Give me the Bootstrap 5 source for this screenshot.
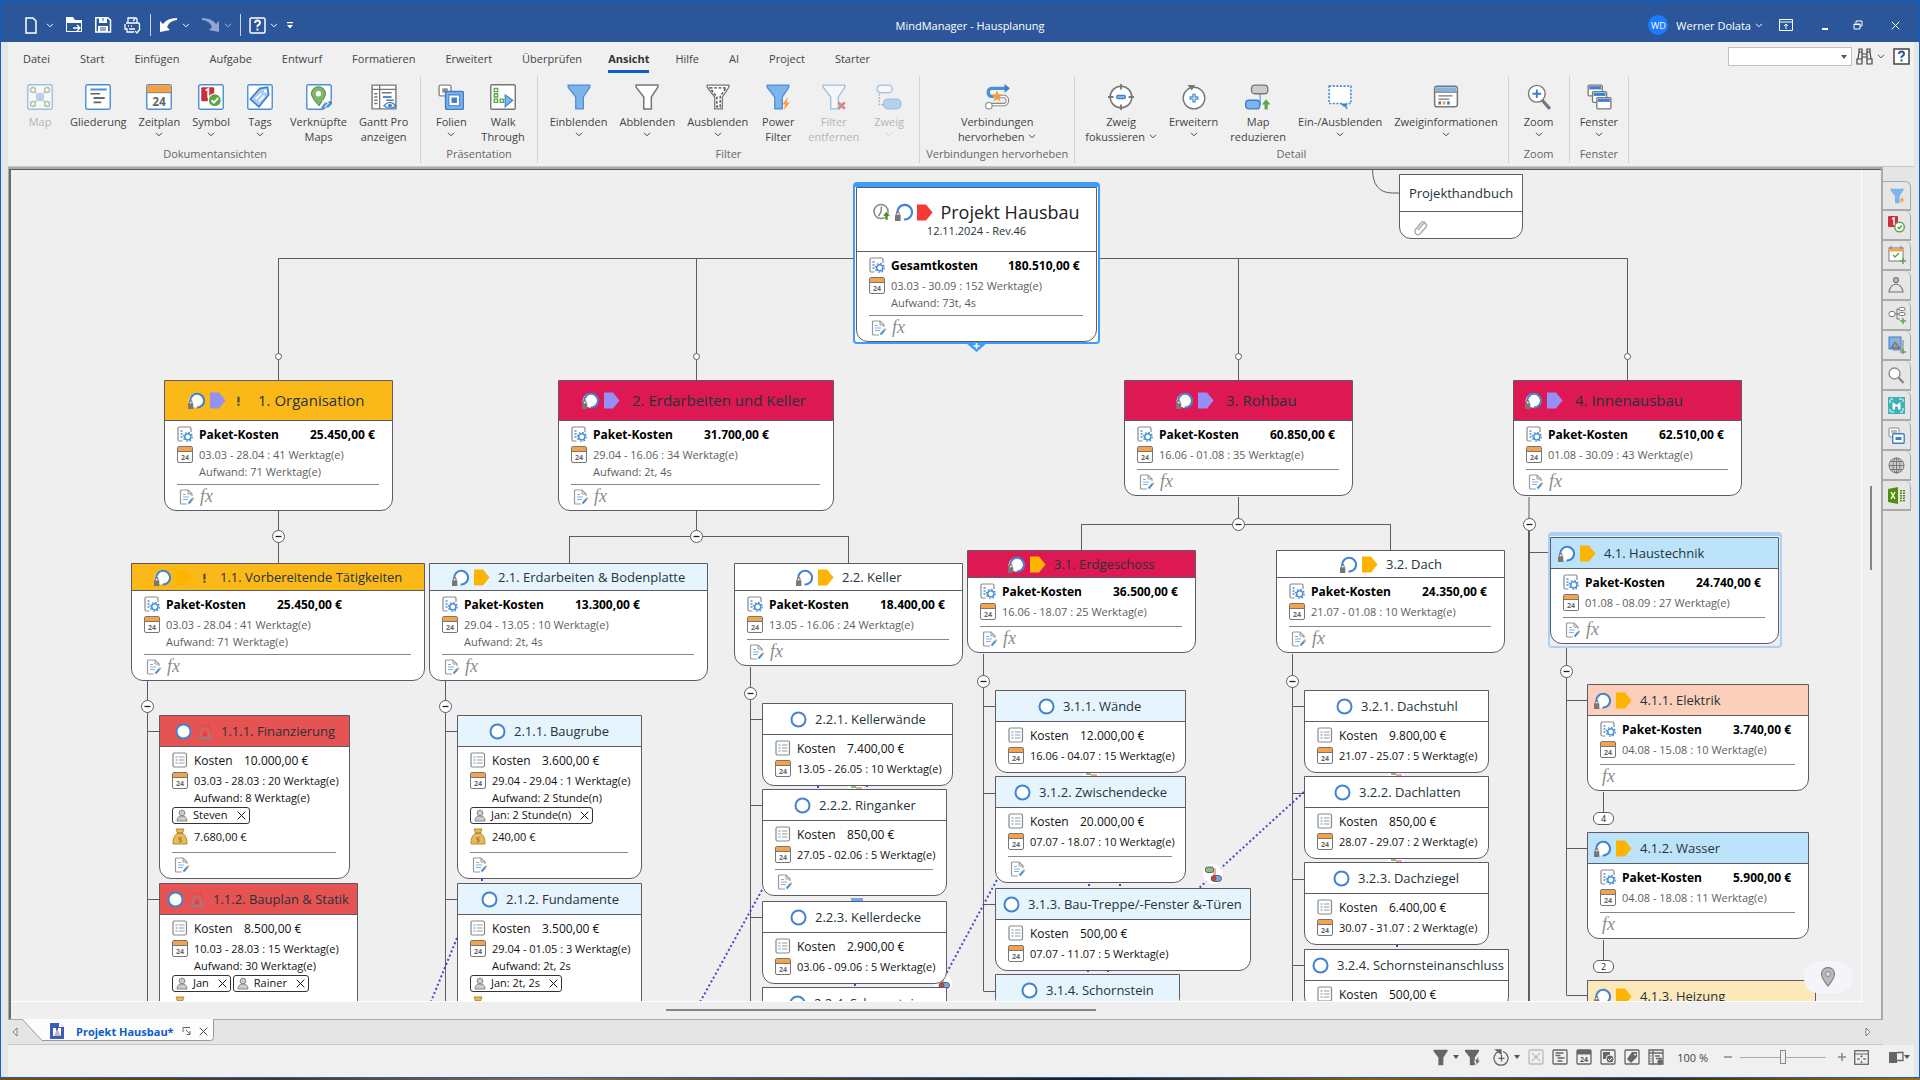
<!DOCTYPE html>
<html lang="de">
<head>
<meta charset="utf-8">
<meta name="viewport" content="width=device-width, initial-scale=1">
<title>MindManager - Hausplanung</title>
<link href="https://cdn.jsdelivr.net/npm/bootstrap@5.3.0/dist/css/bootstrap.min.css" rel="stylesheet">
<style>
:root{--ui:"Open Sans","Noto Sans",sans-serif;--ln:#5d5c66;--blue:#4a90d9}
body{font-family:var(--ui);font-size:11px;line-height:15px;color:#444;background:#e6e6e6;overflow:hidden}
svg{display:block;flex:none}
button{font-family:inherit}
.app-window{border:1px solid #0b63c9;border-bottom:0;min-height:0}
.fit-h{min-height:0}
.fit-w{min-width:0}
.plain{background:none;border:0;padding:0;color:inherit;display:flex;align-items:center}
.desk{height:2px;background:linear-gradient(90deg,#7a4a1c,#4c3420,#8a6a50,#5a3a1c,#1c1c1c,#8a5a1c,#3a2410,#a06a20);border-top:1px solid #1b5fb8;box-sizing:content-box}
/* title bar */
.titlebar{height:41px;background:#2b579a;color:#fff;display:grid;grid-template-columns:1fr auto 1fr;align-items:center;padding:7px 3px 0 23px}
.titlebar .vr-line{width:1px;height:22px;background:#c8d4e8}
.avatar{width:20px;height:20px;border-radius:50%;background:#1e7bff;font-size:9px}
/* ribbon */
.frame{padding:0 5px 0 7px}
.ribbon{background:#f0f0f0;border-bottom:1px solid #c6c6c6}
.menu-tabs{height:33px}
.menu-tabs .nav-link{color:#444;padding:9px 15px 0;height:31px;line-height:15px;white-space:nowrap}
.menu-tabs .nav-link.active{font-weight:700;color:#333;padding:9px 0 0;margin:0 11px;border-bottom:3px solid #0b5ec9}
.search-box{width:124px;height:19px;border:1px solid #c0c0c0;border-radius:0;background-color:#fff;font-size:11px;padding:0 4px}
.search-wrap{position:relative}
.search-wrap svg{position:absolute;right:5px;top:8px}
.groups{height:91px}
.rgroup{border-right:1px solid #d2d2d2;height:87px;padding:0 6px;display:flex;flex-direction:column;justify-content:space-between;margin-top:1px}
.rbtn{border:0;border-radius:2px;padding:9px 6px 0;min-width:48px;font-size:11px;line-height:15px;color:#444;display:flex;flex-direction:column;align-items:center;white-space:nowrap}
.rbtn svg.big{width:26px;height:26px;margin-bottom:4px;margin-top:-1px}
.rbtn .chev{margin-top:3px}
.rbtn:disabled{color:#b5b5b5;border:0;opacity:1}
.rbtn:disabled svg{opacity:.5}
.gtitle{text-align:center;color:#666;height:17px;white-space:nowrap}
/* map */
.pane{border:1px solid #aaa;border-top:2px solid #aaa;border-right:2px solid #aaa;background:#efefef;min-height:0}
.pane-in{border-top:1px solid #5a5a5a;border-left:2px solid #6a6a6a;position:relative;overflow:hidden;padding:0 19px 17px 0}
.view{position:relative;overflow:hidden;border-right:1px solid #fff;border-bottom:1px solid #fff}
.plane{position:absolute;left:-11px;top:-170px;width:1960px;height:1100px}
.plane>svg{position:absolute;left:0;top:0}
.node{position:absolute;border:1px solid var(--ln);border-radius:0 0 12px 12px;background:#fff;color:#111}
.node .hd{display:flex;align-items:center;border-bottom:1px solid var(--ln);color:#25333a;white-space:nowrap;gap:5px}
.node .hd span{padding-left:3px}
.l0 .hd{height:64px}.l1 .hd{height:40px;font-size:15px}.l2 .hd{height:27px;font-size:13px}.l3 .hd{height:31px;font-size:13px}
.l1 .hd span{padding-left:7px}
.node .bd{padding:3px 13px 0 12px}
.rw{display:flex;align-items:center;gap:6px;height:20px;white-space:nowrap}
.rw.eff{height:15px;padding-left:22px}
.rw.money{height:22px}
.rw.chips{height:20px;gap:2px}
.rw.sole{margin-bottom:3px}
.lv .lbl{width:50px}.pk .lbl{width:111px;font-weight:700}.pk .val{font-weight:700}.pk .kos{color:#000}
.l0 .pk .lbl{width:117px}
.kos{font-size:12px}
.grey{color:#5e5e5e}
.ft{height:26px;border-top:1px solid #85858c;margin-top:5px;padding:0 0 2px 2px;display:flex;align-items:center;gap:5px}
.nofoot{padding-bottom:4px !important}
.fx{font:italic 18px "Liberation Serif",serif;color:#8c8c8c}
.chip{border:1px solid #333;border-radius:3px;height:17px;display:flex;align-items:center;gap:5px;padding:0 3px;line-height:14px}
.sel-root{position:absolute;border:2px solid #3d9bff;border-top-width:5px;border-radius:4px;background:#fff}
.sel-soft{position:absolute;border:2px solid #a9d1fa;border-top-width:4px;border-radius:4px;background:#efefef}
.root-head{width:100%;text-align:center}
.root-title{font-size:18px;line-height:22px;color:#222}
.note-hd{height:37px;font-size:13px}
.note-bd{height:26px;padding:8px 0 0 13px}
.sb{position:absolute;background:#858585}
.sb-h{left:35%;width:23%;height:2px;bottom:8px}
.sb-v{right:9px;top:37%;margin-top:2px;height:84px;width:2px}
.pin-btn{position:absolute;right:9px;bottom:8px;width:48px;height:32px;border-radius:14px;background:#f4f4f9;border:0;display:flex;align-items:center;justify-content:center}
/* side tabs */
.side{width:31px;padding-top:14px}
.side button{width:28px;height:30px;background:#e6e6e6;border:0;border-bottom:2px solid #aaa;border-right:1px solid #aaa;border-top-right-radius:6px;display:flex;align-items:center;justify-content:center;padding:0}
.side button:first-child{border-top:1px solid #aaa}
/* bottom */
.doctabs{height:25px;background:#e5e5e5;border-bottom:1px solid #c6c6c6}
.doctab{position:relative;width:192px;height:22px;padding-left:28px}
.doctab>*{position:relative}
.doctab>svg.bgs{position:absolute;left:0;top:-1px}
.doctab a{color:#0b5ec9;font-weight:700;text-decoration:none;white-space:nowrap}
.status{height:32px;background:#f0f0f0;padding:0 4px 8px 0;color:#444}
.zoomr{-webkit-appearance:none;appearance:none;width:86px;height:16px;background:linear-gradient(#aaa,#aaa) center/100% 1px no-repeat}
.zoomr::-webkit-slider-thumb{-webkit-appearance:none;width:6px;height:14px;background:#f0f0f0;border:1px solid #888}
</style>
<script src="https://cdn.jsdelivr.net/npm/bootstrap@5.3.0/dist/js/bootstrap.bundle.min.js"></script>
</head>
<body class="vh-100 d-flex flex-column">
<svg width="0" height="0" class="position-absolute" aria-hidden="true">
<defs>
<symbol id="cv" viewBox="0 0 8 5"><path d="M1 .8l3 3 3-3" fill="none" stroke="currentColor"/></symbol>
<symbol id="caret" viewBox="0 0 6 4"><path d="M0 0h6L3 4z" fill="#555"/></symbol>
<symbol id="fun" viewBox="0 0 24 24"><path d="M2 1h20v2l-6 9v11H9V12L2 3z"/></symbol>
<symbol id="ring" viewBox="0 0 16 16"><circle cx="8" cy="8" r="6.6" fill="#fff" stroke="#4384d0" stroke-width="1.9"/></symbol>
<symbol id="ringl" viewBox="0 0 16 16"><path d="M3 13.500A6.800 6.800 0 1 1 8 15z" fill="#fff"/><path d="M2.200 9A6.500 6.500 0 1 1 8 14.600" fill="none" stroke="#4384d0" stroke-width="1.900"/><rect y="10.500" width="5" height="5.500" rx=".5" fill="#777"/><path d="M1.200 10.500V9.400a1.300 1.300 0 0 1 2.600 0v1.100" fill="none" stroke="#777"/></symbol>
<symbol id="tag" viewBox="0 0 16 16"><path d="M0 0h9L15.500 8 9 16H0z"/></symbol>
<symbol id="warn" viewBox="0 0 16 16"><path d="M8 1l7.500 14H.5z" fill="#fdb913"/><path d="M8 4v6M8 11.500v2" stroke="#444" stroke-width="2.200"/></symbol>
<symbol id="alarm" viewBox="0 0 14 16"><path d="M3 13V9a4 4 0 0 1 8 0v4" fill="#e55353" stroke="#a87880" stroke-width="1.500"/><path d="M5.500 13V9.500q1.500-2 3 0V13z" fill="#ff2f3c"/><path d="M1 14h12" stroke="#8c8088" stroke-width="2"/><path d="M7 1v2M3 2l1 2M11 2l-1 2M1 6h1M12 6h1" stroke="#ff2f3c"/></symbol>
<symbol id="cal" viewBox="0 0 16 17"><rect x=".5" y=".5" width="15" height="16" rx="1.500" fill="#fff" stroke="#777"/><path d="M1 1h14v4.500H1z" fill="#f4a34c"/><path d="M.5 5.500h15" stroke="#777"/><text x="8" y="13.600" font-size="7" font-weight="700" text-anchor="middle" fill="#666">24</text></symbol>
<symbol id="list" viewBox="0 0 16 16"><rect x="1" y="1" width="13.500" height="14" rx="1.500" fill="#fff" stroke="#888" stroke-width="1.200"/><path d="M3.500 5h2M3.500 8h2M3.500 11h2" stroke="#4a90d9" stroke-width="1.200"/><path d="M7 5h5.500M7 8h5.500M7 11h5.500" stroke="#999" stroke-width="1.200"/></symbol>
<symbol id="gear" viewBox="0 0 16 16"><path d="M5.500 15H2.500q-1.500 0-1.500-1.500v-11Q1 1 2.500 1h10Q14 1 14 2.500V6" fill="none" stroke="#888" stroke-width="1.200"/><path d="M3.500 5h2M3.500 8h2M3.500 11h2" stroke="#4a90d9" stroke-width="1.300"/><circle cx="10.800" cy="10.800" r="3.100" fill="#fff" stroke="#4a90d9" stroke-width="1.500"/><circle cx="10.800" cy="10.800" r="4.500" fill="none" stroke="#4a90d9" stroke-width="1.200" stroke-dasharray="1.700 1.800"/></symbol>
<symbol id="note" viewBox="0 0 16 16"><path d="M13 7V5L9 1H2.500Q1.500 1 1.500 2v12q0 1 1 1H8" fill="#fff" stroke="#999" stroke-width="1.200"/><path d="M9 1v4h4" fill="none" stroke="#999"/><path d="M4 5.500h3M4 8h6M4 10.500h5" stroke="#7fb2e4" stroke-width="1.200"/><path d="M9.500 14.500l4-4.500" stroke="#4a90d9" stroke-width="2"/><path d="M13.500 10l1.200-1.300" stroke="#f4a34c" stroke-width="2"/></symbol>
<symbol id="pers" viewBox="0 0 12 13"><circle cx="6" cy="4" r="2.900" fill="#ccc" stroke="#888"/><path d="M1 12q0-5 5-5t5 5z" fill="#ccc" stroke="#888"/></symbol>
<symbol id="xx" viewBox="0 0 9 9"><path d="M.7.7l7.600 7.600M8.300.7L.7 8.300" stroke="currentColor" fill="none"/></symbol>
<symbol id="bag" viewBox="0 0 16 17"><path d="M4 1h8l-1.500 4Q15.500 9 15 16H1Q.5 9 5.500 5z" fill="#e8b959" stroke="#b98a35"/><path d="M5 5h6" stroke="#9a6f22"/><text x="8" y="14" font-size="8" text-anchor="middle" fill="#8a6420">$</text></symbol>
<symbol id="clk" viewBox="0 0 18 18"><circle cx="8" cy="8.500" r="7" fill="#fff" stroke="#888" stroke-width="1.600"/><path d="M8.500 3.500L8 9l-2.500 4" fill="none" stroke="#888" stroke-width="1.500"/><path d="M13.500 8.500l4 4.500h-2.500v4h-3v-4H9.500z" fill="#3f8f1d" stroke="#fff" stroke-width=".6"/></symbol>
<symbol id="rel" viewBox="0 0 16 16"><path d="M5 4h4v8" fill="none" stroke="#f0a8a0" stroke-width="3"/><rect x="0" y="1" width="8" height="5.500" rx="2" fill="#8abf78"/><rect x="6" y="9.500" width="10" height="6" rx="3" fill="#6fa9e6"/><circle cx="8" cy="12.500" r="2.400" fill="#e23b2e"/></symbol>
</defs>
</svg>

<div class="app-window d-flex flex-column flex-grow-1">
<header class="titlebar">
  <div class="d-flex align-items-center">
    <button class="plain" aria-label="Neu"><svg width="14" height="17" fill="none" stroke="#fff" stroke-width="1.500"><path d="M2 1h7l3 3v12H2z"/></svg></button>
    <svg class="ms-2" width="8" height="5"><use href="#cv"/></svg>
    <button class="plain ms-2 ps-1" aria-label="Öffnen"><svg width="17" height="16"><path d="M0 0h7l2 3h7v12H0z" fill="#fff"/><path d="M1 6h14v8H1z" fill="#2b579a"/><path d="M7 11h7m-3-3l3 3-3 3" stroke="#fff" fill="none" stroke-width="1.300"/></svg></button>
    <button class="plain ms-2 ps-1" aria-label="Speichern"><svg width="17" height="16"><path d="M.8.8h12L15.500 3v12H.8z" fill="none" stroke="#fff" stroke-width="1.500"/><path d="M4 0h8v6H4zM3 9h10v6H3z" fill="#fff"/><path d="M8 1v3M5 11h6M5 13h6" stroke="#2b579a"/></svg></button>
    <button class="plain ms-2 ps-1" aria-label="Drucken"><svg width="18" height="17" fill="none" stroke="#fff" stroke-width="1.300"><path d="M4 6V1h8l1 1v4M2 6h12q1.500 0 1.500 1.500V12M10 15H3v-3H1V7M4 9h1m2 0h1M5 12h6M9 4l2-2M11 14l2 2 3-4"/></svg></button>
    <span class="vr-line ms-2 me-2"></span>
    <button class="plain" aria-label="Rückgängig"><svg width="19" height="16" fill="#fff"><path d="M1 15V4l3 3Q8 1 18 1v2Q10 4 8 10l3 3z"/></svg></button>
    <svg class="ms-1" width="8" height="5"><use href="#cv"/></svg>
    <button class="plain ms-2 ps-1" aria-label="Wiederholen"><svg width="18" height="16" fill="#8fa7cf"><path d="M17 15V4l-3 3Q10 1 0 1v2q8 1 10 7l-3 3z"/></svg></button>
    <svg class="ms-1" width="8" height="5" opacity=".6"><use href="#cv"/></svg>
    <span class="vr-line ms-2 me-2"></span>
    <button class="plain" aria-label="Hilfe"><svg width="17" height="17"><rect x="1" y="1" width="15" height="15" rx="1.500" fill="none" stroke="#fff" stroke-width="1.500"/><path d="M6 6q0-2.500 2.500-2.500T11 6q0 1.200-1.500 2T8.500 10M8.500 11.500v2" fill="none" stroke="#fff" stroke-width="2"/></svg></button>
    <svg class="ms-1" width="8" height="5"><use href="#cv"/></svg>
    <svg class="ms-2" width="8" height="8" fill="#fff"><path d="M1 1h6v1.200H1zM1 4h6L4 7.500z"/></svg>
  </div>
  <div>MindManager - Hausplanung</div>
  <div class="d-flex align-items-center justify-content-end pe-3">
    <span class="avatar d-flex align-items-center justify-content-center me-2">WD</span>
    <button class="plain me-3">Werner Dolata<svg class="ms-1" width="8" height="5"><use href="#cv"/></svg></button>
    <button class="plain me-4" aria-label="Menüband"><svg width="14" height="12" fill="none" stroke="#fff"><path d="M.5.5h13v11H.5zM.5 3h13M7 10V5M5 7l2-2 2 2"/></svg></button>
    <button class="plain ms-1 me-4" aria-label="Minimieren"><svg width="8" height="12"><path d="M1 9h6v2H1z" fill="#fff"/></svg></button>
    <button class="plain me-4" aria-label="Wiederherstellen"><svg width="10" height="10" fill="none" stroke="#fff"><path d="M3 3V1h6v5H7M1 4h6v5H1zM1 4.500h6"/></svg></button>
    <button class="plain ms-1" aria-label="Schließen"><svg width="9" height="9"><use href="#xx"/></svg></button>
  </div>
</header>

<div class="frame fit-h d-flex flex-column flex-grow-1">
<div class="ribbon">
  <div class="menu-tabs d-flex justify-content-between">
    <ul class="nav flex-nowrap">
      <li><a class="nav-link" href="#">Datei</a></li><li><a class="nav-link" href="#">Start</a></li><li><a class="nav-link" href="#">Einfügen</a></li><li><a class="nav-link" href="#">Aufgabe</a></li><li><a class="nav-link" href="#">Entwurf</a></li><li><a class="nav-link" href="#">Formatieren</a></li><li><a class="nav-link" href="#">Erweitert</a></li><li><a class="nav-link" href="#">Überprüfen</a></li><li><a class="nav-link active" href="#">Ansicht</a></li><li><a class="nav-link" href="#">Hilfe</a></li><li><a class="nav-link" href="#">AI</a></li><li><a class="nav-link" href="#">Project</a></li><li><a class="nav-link" href="#">Starter</a></li>
    </ul>
    <div class="d-flex align-items-center me-1 pb-2 pt-1">
      <label class="search-wrap"><input class="form-control search-box" type="text" aria-label="Suchen"><svg width="6" height="4"><use href="#caret"/></svg></label>
      <button class="plain ms-1" aria-label="Suchen"><svg width="17" height="17" fill="none" stroke="#444" stroke-width="1.200"><path d="M3 1h3v3H3zM11 1h3v3h-3zM3 4L2 11M6 4v7M11 4v7M14 4l1 7M6 6h5v3H6zM1 11h5v5H1zM11 11h5v5h-5z"/></svg></button>
      <svg class="ms-1" width="8" height="5"><use href="#cv"/></svg>
      <button class="plain ms-2" aria-label="Hilfe"><svg width="17" height="17"><rect x="1" y="1" width="15" height="15" fill="#fff" stroke="#444" stroke-width="1.500"/><path d="M6 6q0-2.500 2.500-2.500T11 6q0 1.200-1.500 2T8.500 10M8.500 11.500v2" fill="none" stroke="#2b579a" stroke-width="2"/></svg></button>
    </div>
  </div>
  <div class="groups d-flex">
    <section class="rgroup ps-2"><div class="d-flex">
      <button class="btn rbtn" disabled><svg class="big" viewBox="0 0 24 24" fill="none"><rect x=".7" y=".7" width="22.600" height="22.600" rx="1.500" fill="#fff" stroke="#4a90d9" stroke-width="1.300"/><path d="M5 5l14 14M19 5L5 19" stroke="#888"/><circle cx="12" cy="12" r="4" fill="#7db4ea"/><g fill="#fff" stroke="#5ea64a" stroke-width="1.300"><circle cx="5.500" cy="5.500" r="2.300"/><circle cx="18.500" cy="5.500" r="2.300"/><circle cx="5.500" cy="18.500" r="2.300"/><circle cx="18.500" cy="18.500" r="2.300"/></g></svg>Map</button>
      <button class="btn rbtn"><svg class="big" viewBox="0 0 24 24"><rect x=".7" y=".7" width="22.600" height="22.600" rx="1.500" fill="#fff" stroke="#4a90d9" stroke-width="1.300"/><path d="M5 5h15M8 13h10" stroke="#4a90d9" stroke-width="1.800"/><path d="M5 9h9M8 13h10M8 17h7" stroke="#666" stroke-width="1.600"/></svg>Gliederung</button>
      <button class="btn rbtn"><svg class="big" viewBox="0 0 24 24"><rect x=".7" y=".7" width="22.600" height="22.600" rx="1.500" fill="#fff" stroke="#4a90d9" stroke-width="1.300"/><path d="M1 1h22v7H1z" fill="#f7a13c"/><path d="M.5 8h23" stroke="#888"/><text x="12" y="20" font-size="11" font-weight="700" text-anchor="middle" fill="#666">24</text></svg>Zeitplan<svg class="chev" width="8" height="5"><use href="#cv"/></svg></button>
      <button class="btn rbtn"><svg class="big" viewBox="0 0 24 24"><rect x=".7" y=".7" width="22.600" height="22.600" rx="1.500" fill="#fff" stroke="#4a90d9" stroke-width="1.300"/><rect x="3" y="3" width="12" height="13" rx="1" fill="#c9303a"/><path d="M7 6l2.500-1.500V13" stroke="#fff" stroke-width="1.800" fill="none"/><circle cx="15.500" cy="15" r="6" fill="#5ea64a" stroke="#fff"/><path d="M12.500 15l2.200 2.300 4-4.500" stroke="#fff" stroke-width="1.700" fill="none"/></svg>Symbol<svg class="chev" width="8" height="5"><use href="#cv"/></svg></button>
      <button class="btn rbtn"><svg class="big" viewBox="0 0 24 24"><rect x=".7" y=".7" width="22.600" height="22.600" rx="1.500" fill="#fff" stroke="#4a90d9" stroke-width="1.300"/><path d="M12 4l7-1 1 7-9 11-8-7z" fill="#a9cdf2" stroke="#3f7fca" stroke-width="1.500"/><circle cx="17" cy="6.500" r="1.500" fill="#fff"/><path d="M8 14l5-5M11 16l5-5" stroke="#fff" stroke-width="1.500"/></svg>Tags<svg class="chev" width="8" height="5"><use href="#cv"/></svg></button>
      <button class="btn rbtn"><svg class="big" viewBox="0 0 24 24"><rect x=".7" y=".7" width="22.600" height="22.600" rx="1.500" fill="#fff" stroke="#4a90d9" stroke-width="1.300"/><path d="M12 20Q5 12 5 9a6.500 6.500 0 0 1 13 0q0 3-6 11z" fill="#7fb66b" stroke="#5a9a48"/><circle cx="11.500" cy="9" r="2.500" fill="#fff"/><path d="M15 15h9v9h-9z" fill="#f0f0f0"/><path d="M16 22l2.500-3M20 20l3-3" stroke="#4a90d9" stroke-width="3.500" stroke-linecap="round"/><path d="M17 21.500l4-4" stroke="#f0f0f0"/></svg>Verknüpfte<span>Maps</span></button>
      <button class="btn rbtn"><svg class="big" viewBox="0 0 24 24"><path d="M1 1h22v22H1z" fill="#fff" stroke="#777" stroke-width="1.300"/><path d="M1 5h22M8 1v22" stroke="#777" stroke-width="1.200"/><path d="M3 9h3M3 12h3M3 15h3M3 18h3M10 8h9M14 15h7" stroke="#777" stroke-width="1.400"/><path d="M11 12h8" stroke="#4a90d9" stroke-width="2"/><path d="M12 20q5-6 11 0-5 5-11 0z" fill="#fff" stroke="#3f7fca" stroke-width="1.300"/><circle cx="17.500" cy="20" r="1.800" fill="#3f7fca"/></svg>Gantt Pro<span>anzeigen</span></button>
    </div><div class="gtitle">Dokumentansichten</div></section>
    <section class="rgroup"><div class="d-flex">
      <button class="btn rbtn"><svg class="big" viewBox="0 0 24 24"><rect x="1" y="1" width="11" height="10" rx="1.500" fill="#fff" stroke="#888" stroke-width="1.300"/><path d="M4 4h5v4H4z" fill="#888"/><rect x="7" y="7" width="16.500" height="16.500" rx="1.500" fill="#7db4ea" stroke="#3f7fca" stroke-width="1.400"/><path d="M10 10h10v10H10z" fill="#fff" stroke="#3f7fca"/><path d="M12.500 12.500h5v5h-5z" fill="#3f7fca"/></svg>Folien<svg class="chev" width="8" height="5"><use href="#cv"/></svg></button>
      <button class="btn rbtn"><svg class="big" viewBox="0 0 24 24"><rect x=".7" y=".7" width="22.600" height="22.600" rx="1" fill="#fff" stroke="#777" stroke-width="1.300"/><g fill="#fff" stroke="#5ea64a" stroke-width="1.300"><path d="M4 4h3v3H4zM4 9h3v3H4zM4 14h3v3H4zM9.500 14h3v3h-3z"/></g><path d="M14 10l7 5-7 6z" fill="#7db4ea" stroke="#3f7fca"/></svg>Walk<span>Through</span></button>
    </div><div class="gtitle">Präsentation</div></section>
    <section class="rgroup"><div class="d-flex">
      <button class="btn rbtn"><svg class="big" viewBox="0 0 24 24" fill="#7db4ea" stroke="#4a90d9" stroke-width="1.200"><use href="#fun"/></svg>Einblenden<svg class="chev" width="8" height="5"><use href="#cv"/></svg></button>
      <button class="btn rbtn"><svg class="big" viewBox="0 0 24 24" fill="#fff" stroke="#777" stroke-width="1.400"><use href="#fun"/></svg>Abblenden<svg class="chev" width="8" height="5"><use href="#cv"/></svg></button>
      <button class="btn rbtn"><svg class="big" viewBox="0 0 24 24" fill="#fff" stroke="#777" stroke-width="1.200"><use href="#fun"/><path d="M4.500 3.500h15l-5.500 8v9.500h-3V12z" stroke="#444" stroke-dasharray="2.500 1.500" fill="none"/></svg>Ausblenden<svg class="chev" width="8" height="5"><use href="#cv"/></svg></button>
      <button class="btn rbtn"><svg class="big" viewBox="0 0 24 24" fill="#7db4ea" stroke="#4a90d9" stroke-width="1.200"><use href="#fun"/><path d="M21 12l-5 7h2.500l-1 5 5.500-7h-3z" fill="#f7a13c" stroke="none"/></svg>Power<span>Filter</span></button>
      <button class="btn rbtn" disabled><svg class="big" viewBox="0 0 24 24" fill="#fff" stroke="#4a90d9" stroke-width="1.200"><use href="#fun"/><path d="M16 17l6 6M22 17l-6 6" stroke="#b02a1e" stroke-width="2.500"/></svg>Filter<span>entfernen</span></button>
      <button class="btn rbtn" disabled><svg class="big" viewBox="0 0 24 24" stroke="#4a90d9" stroke-width="1.200"><rect x="1" y="1" width="14" height="7" rx="3.500" fill="#fff"/><path d="M3 9v10h4" fill="none" stroke="#666" stroke-dasharray="1.500 1.500"/><rect x="7" y="14" width="16" height="9" rx="4" fill="#7db4ea"/></svg>Zweig<svg class="chev" width="8" height="5"><use href="#cv"/></svg></button>
    </div><div class="gtitle">Filter</div></section>
    <section class="rgroup"><div class="d-flex justify-content-center">
      <button class="btn rbtn"><svg class="big" viewBox="0 0 24 24" fill="none"><path d="M20 4H6.500a4 4 0 0 0 0 7.500H9" stroke="#4a90d9" stroke-width="3"/><path d="M19 0l5 4-5 4z" fill="#3f7fca"/><path d="M14 11.500h5a4 4 0 0 1 0 7.500H6" stroke="#888" stroke-width="3.200"/><path d="M14 11.500h5a4 4 0 0 1 0 7.500H6" stroke="#fff" stroke-width="1.300"/><circle cx="4.500" cy="20" r="3" fill="#fff" stroke="#888"/><path d="M12 6l1.500 3.500 3.500.5-2.700 2.300.8 3.700-3.100-2-3.100 2 .8-3.700L7 10l3.500-.5z" fill="#f59a3e"/></svg>Verbindungen<span class="d-flex align-items-center gap-1">hervorheben <svg width="8" height="5"><use href="#cv"/></svg></span></button>
    </div><div class="gtitle">Verbindungen hervorheben</div></section>
    <section class="rgroup px-1"><div class="d-flex">
      <button class="btn rbtn"><svg class="big" viewBox="0 0 24 24"><circle cx="12" cy="12" r="10" fill="#fff" stroke="#777" stroke-width="1.400"/><path d="M12 0v5M12 19v5M0 12h5M19 12h5" stroke="#777" stroke-width="1.700"/><rect x="8" y="10.500" width="8" height="3" rx="1" fill="#7db4ea" stroke="#3f7fca"/></svg>Zweig<span class="d-flex align-items-center gap-1">fokussieren <svg width="8" height="5"><use href="#cv"/></svg></span></button>
      <button class="btn rbtn"><svg class="big" viewBox="0 0 24 24"><circle cx="12" cy="13" r="10" fill="#fff" stroke="#777" stroke-width="1.300"/><path d="M6 1h7l-3 5z" fill="#777"/><path d="M11 9.500h2V12h2.500v2H13v2.500h-2V14H8.500v-2H11z" fill="#fff" stroke="#4a90d9" stroke-width="1.200"/></svg>Erweitern<svg class="chev" width="8" height="5"><use href="#cv"/></svg></button>
      <button class="btn rbtn"><svg class="big" viewBox="0 0 24 24"><path d="M14 9v10H9" fill="none" stroke="#4a90d9"/><rect x="6" y="1" width="15" height="8" rx="3" fill="#ccc" stroke="#777" stroke-width="1.200"/><rect x="0.600" y="15" width="13" height="8" rx="3" fill="#7db4ea" stroke="#3f7fca" stroke-width="1.200"/><path d="M19.500 14l4 5h-2.500v4.500h-3V19h-2.500z" fill="#5ea64a"/></svg>Map<span>reduzieren</span></button>
      <button class="btn rbtn"><svg class="big" viewBox="0 0 24 24"><path d="M2 2h20v16h-4v4l-5-4H2z" fill="#fff" stroke="#4a90d9" stroke-width="1.500" stroke-dasharray="2 1.300"/><path d="M12 18h6v4z" fill="#3f7fca"/></svg>Ein-/Ausblenden<svg class="chev" width="8" height="5"><use href="#cv"/></svg></button>
      <button class="btn rbtn"><svg class="big" viewBox="0 0 24 24"><rect x="1.500" y="2" width="21" height="19" rx="2" fill="#fff" stroke="#777" stroke-width="1.400"/><path d="M2.500 3h19v4h-19z" fill="#7db4ea"/><path d="M1.500 7.500h21M5 11h13M5 14h10" stroke="#777" stroke-width="1.200"/><path d="M5 16h2.500v3H5z" fill="#777"/><path d="M9 16h2.500v3H9z" fill="#f7a13c"/><path d="M13 16h2.500v3H13z" fill="#3f7fca"/></svg>Zweiginformationen<svg class="chev" width="8" height="5"><use href="#cv"/></svg></button>
    </div><div class="gtitle">Detail</div></section>
    <section class="rgroup"><div class="d-flex">
      <button class="btn rbtn"><svg class="big" viewBox="0 0 24 24"><path d="M15 15l7 8" stroke="#777" stroke-width="3"/><circle cx="10" cy="9" r="7.700" fill="#fff" stroke="#777" stroke-width="1.300"/><path d="M10 5v8M6 9h8" stroke="#3f7fca" stroke-width="1.700"/></svg>Zoom<svg class="chev" width="8" height="5"><use href="#cv"/></svg></button>
    </div><div class="gtitle">Zoom</div></section>
    <section class="rgroup px-1"><div class="d-flex">
      <button class="btn rbtn"><svg class="big" viewBox="0 0 24 24" fill="#fff" stroke="#777" stroke-width="1.200"><rect x="2" y="1" width="13" height="10" rx="1"/><path d="M3 2h11v3H3z" fill="#3f7fca" stroke="none"/><rect x="6" y="7" width="13" height="10" rx="1"/><path d="M7 8h11v3H7z" fill="#3f7fca" stroke="none"/><rect x="10" y="12.500" width="13" height="10.500" rx="1"/><path d="M11 13.500h11v3H11z" fill="#3f7fca" stroke="none"/></svg>Fenster<svg class="chev" width="8" height="5"><use href="#cv"/></svg></button>
    </div><div class="gtitle">Fenster</div></section>
  </div>
</div>

<div class="fit-h d-flex flex-grow-1">
  <div class="fit-w d-flex flex-column flex-grow-1">
    <main class="pane flex-grow-1 d-flex">
      <div class="pane-in flex-grow-1 d-flex">
        <div class="view flex-grow-1"><div class="plane" id="plane"></div>
          <button class="pin-btn" aria-label="Ansicht anheften"><svg width="16" height="20"><path d="M8 19Q1.500 11 1.500 7a6.500 6.500 0 0 1 13 0Q14.500 11 8 19z" fill="#bbb" stroke="#888" stroke-width="1.300"/><circle cx="8" cy="7" r="2.500" fill="#ddd" stroke="#888"/></svg></button>
        </div>
        <span class="sb sb-h"></span><span class="sb sb-v"></span>
      </div>
    </main>
    <div class="doctabs d-flex justify-content-between">
      <div class="d-flex"><button class="plain ps-1 me-1" aria-label="Zurück"><svg width="6" height="10"><path d="M5 1v8L1 5z" fill="#fff" stroke="#777"/></svg></button>
        <div class="doctab d-flex align-items-center"><svg class="bgs" width="192" height="23"><path d="M0 0l20 21.500h168.500q3 0 3-3V0" fill="#fcfcfc" stroke="#999"/></svg>
          <svg width="14" height="16"><path d="M0 0h9l5 4v12H0z" fill="#3f5bb8"/><path d="M9 0v4h5z" fill="#fff"/><path d="M3 5h3v8H3zM8 5h3v8H8z" fill="#fff"/><path d="M7 6l4 7H4z" fill="#bbb"/></svg>
          <a class="ms-2 ps-1" href="#">Projekt Hausbau*</a>
          <svg class="ms-2 flex-shrink-0" width="9" height="8" fill="none" stroke="#666"><path d="M8 .5H1V5M4 3l4 4M8 4v3.500H4.500"/></svg>
          <button class="plain ms-2" aria-label="Schließen"><svg width="9" height="9" stroke="#777"><use href="#xx"/></svg></button>
        </div></div>
      <button class="plain pe-2 me-1" aria-label="Weiter"><svg width="6" height="10"><path d="M1 1v8l4-4z" fill="#fff" stroke="#777"/></svg></button>
    </div>
  </div>
  <aside class="side" id="side"></aside>
</div>
<footer class="status d-flex align-items-center justify-content-end">
  <button class="plain" aria-label="Filter"><svg width="17" height="17" viewBox="0 0 24 24" fill="#666"><use href="#fun"/></svg></button><svg class="ms-1" width="6" height="4"><use href="#caret"/></svg>
  <button class="plain ms-1" aria-label="Power Filter"><svg width="18" height="17" viewBox="0 0 24 24" fill="#666"><use href="#fun"/><path d="M22 10l-7 8h3l-1 6 7-8h-3z" stroke="#f0f0f0"/></svg></button>
  <button class="plain ms-2 ps-1" aria-label="Erweitern"><svg width="17" height="17" fill="none" stroke="#666" stroke-width="1.300"><path d="M6 2.500a7 7 0 1 0 4 0M8.500 6v6.500M5.500 9.300h6"/><path d="M3 1h5v4z" fill="#666"/></svg></button><svg class="ms-1" width="6" height="4"><use href="#caret"/></svg>
  <button class="plain ms-2" aria-label="Map" disabled><svg width="16" height="16" fill="none" stroke="#bbb" stroke-width="1.300"><rect x="1" y="1" width="14" height="14" rx="1"/><path d="M4 4l2 2M12 4l-2 2M4 12l2-2M12 12l-2-2M7 7h2v2H7z"/></svg></button>
  <button class="plain ms-2" aria-label="Gliederung"><svg width="16" height="16" fill="none" stroke="#666" stroke-width="1.300"><rect x="1" y="1" width="14" height="14" rx="1"/><path d="M3.500 4h8M3.500 6.500h5M5.500 9h7M5.500 12h5"/></svg></button>
  <button class="plain ms-2" aria-label="Zeitplan"><svg width="16" height="16"><rect x="1" y="1" width="14" height="14" rx="1" fill="none" stroke="#666" stroke-width="1.300"/><path d="M1 1h14v4.500H1z" fill="#666"/><text x="8" y="13" font-size="7" font-weight="700" text-anchor="middle" fill="#555">24</text></svg></button>
  <button class="plain ms-2" aria-label="Symbol"><svg width="16" height="16"><rect x="1" y="1" width="14" height="14" rx="1" fill="none" stroke="#666" stroke-width="1.300"/><rect x="3" y="3" width="7" height="7" fill="#666"/><circle cx="10" cy="10" r="4" fill="#666" stroke="#f0f0f0"/><path d="M8 10l1.500 1.500L12 9" stroke="#fff" fill="none"/></svg></button>
  <button class="plain ms-2" aria-label="Tags"><svg width="16" height="16"><rect x="1" y="1" width="14" height="14" rx="1" fill="none" stroke="#666" stroke-width="1.300"/><path d="M8 3l5 0v5l-6 6-4-4z" fill="#666"/><circle cx="11" cy="5.500" r="1" fill="#fff"/></svg></button>
  <button class="plain ms-2 me-2 pe-1" aria-label="Gantt"><svg width="17" height="16" fill="none" stroke="#666" stroke-width="1.300"><path d="M1 1h14v14H1zM1 4h14M5 1v14M7 7h5M8 9.500h6M2.500 7h1M2.500 9.500h1M2.500 12h1"/><circle cx="12" cy="13" r="2" fill="#666"/></svg></button>
  <span class="me-3">100 %</span>
  <button class="plain me-2" aria-label="Verkleinern"><svg width="8" height="8"><path d="M0 4h8" stroke="#888" stroke-width="1.500"/></svg></button>
  <input class="zoomr" type="range" min="0" max="100" value="50" aria-label="Zoom">
  <button class="plain ms-2 ps-1" aria-label="Vergrößern"><svg width="8" height="8"><path d="M0 4h8M4 0v8" stroke="#888" stroke-width="1.500"/></svg></button>
  <button class="plain ms-2 me-3" aria-label="Einpassen"><svg width="15" height="15" fill="none" stroke="#666"><rect x=".7" y=".7" width="13.600" height="13.600" stroke-width="1.300"/><path d="M.7 4h13.600M7.500 5.500v2M7.500 10.500v2M4 9h2M9 9h2M6.500 6.500l1-1 1 1M4.500 8l-1 1 1 1M10.500 8l1 1-1 1M6.500 12l1 1 1-1"/></svg></button>
  <button class="plain ms-1" aria-label="Aufgabenbereich"><svg width="15" height="13"><path d="M0 1h8v11H0z" fill="#666"/><path d="M8 1.500h6v8H8" fill="none" stroke="#666" stroke-width="1.300"/></svg></button><svg width="6" height="4"><use href="#caret"/></svg>
</footer>
</div>
</div>
<div class="desk"></div>

<script>
const use=(id,w=16,h=16,f='')=>`<svg width="${w}" height="${h}"${f?` fill="${f}"`:''}><use href="#${id}"/></svg>`;
const Y='#fab919',C='#de1852',L='#e6f4fe',W='#fff',R='#e55353',B='#bce3fa',P='#fbcfba',S='#fde8ba',V='#9490f7',O='#fdb400';
// x, y, width, level, header colour, header icon offset, icons, title, cost, date line, effort, people, money, footer icons
const nodes=[
 [164,380,229,1,Y,24,'lvw','1. Organisation','25.450,00 €','03.03 - 28.04 : 41 Werktag(e)','71 Werktag(e)',0,0,'nf'],
 [558,380,276,1,C,24,'lv','2. Erdarbeiten und Keller','31.700,00 €','29.04 - 16.06 : 34 Werktag(e)','2t, 4s',0,0,'nf'],
 [1124,380,229,1,C,52,'lv','3. Rohbau','60.850,00 €','16.06 - 01.08 : 35 Werktag(e)',0,0,0,'nf'],
 [1513,380,229,1,C,12,'lv','4. Innenausbau','62.510,00 €','01.08 - 30.09 : 43 Werktag(e)',0,0,0,'nf'],
 [131,563,294,2,Y,23,'low','1.1. Vorbereitende Tätigkeiten','25.450,00 €','03.03 - 28.04 : 41 Werktag(e)','71 Werktag(e)',0,0,'nf'],
 [429,563,279,2,L,23,'lo','2.1. Erdarbeiten & Bodenplatte','13.300,00 €','29.04 - 13.05 : 10 Werktag(e)','2t, 4s',0,0,'nf'],
 [734,563,229,2,W,62,'lo','2.2. Keller','18.400,00 €','13.05 - 16.06 : 24 Werktag(e)',0,0,0,'nf'],
 [967,550,229,2,C,41,'lo','3.1. Erdgeschoss','36.500,00 €','16.06 - 18.07 : 25 Werktag(e)',0,0,0,'nf'],
 [1276,550,229,2,W,64,'lo','3.2. Dach','24.350,00 €','21.07 - 01.08 : 10 Werktag(e)',0,0,0,'nf'],
 [1550,537,229,3,B,8,'lo','4.1. Haustechnik','24.740,00 €','01.08 - 08.09 : 27 Werktag(e)',0,0,0,'nf'],
 [1587,684,222,3,P,7,'lo','4.1.1. Elektrik','3.740,00 €','04.08 - 15.08 : 10 Werktag(e)',0,0,0,'f'],
 [1587,832,222,3,B,7,'lo','4.1.2. Wasser','5.900,00 €','04.08 - 18.08 : 11 Werktag(e)',0,0,0,'f'],
 [1587,980,229,3,S,7,'lo','4.1.3. Heizung','','',0,0,0,''],
 [159,715,191,3,R,16,'ra','1.1.1. Finanzierung','10.000,00 €','03.03 - 28.03 : 20 Werktag(e)','8 Werktag(e)',['Steven'],'7.680,00 €','n'],
 [159,883,199,3,R,8,'ra','1.1.2. Bauplan & Statik','8.500,00 €','10.03 - 28.03 : 15 Werktag(e)','30 Werktag(e)',['Jan','Rainer'],' ','n'],
 [457,715,185,3,L,32,'r','2.1.1. Baugrube','3.600,00 €','29.04 - 29.04 : 1 Werktag(e)','2 Stunde(n)',['Jan: 2 Stunde(n)'],'240,00 €','n'],
 [457,883,185,3,L,24,'r','2.1.2. Fundamente','3.500,00 €','29.04 - 01.05 : 3 Werktag(e)','2t, 2s',['Jan: 2t, 2s'],' ','n'],
 [762,703,191,3,W,28,'r','2.2.1. Kellerwände','7.400,00 €','13.05 - 26.05 : 10 Werktag(e)',0,0,0,''],
 [762,789,185,3,W,32,'r','2.2.2. Ringanker','850,00 €','27.05 - 02.06 : 5 Werktag(e)',0,0,0,'n'],
 [762,901,185,3,W,28,'r','2.2.3. Kellerdecke','2.900,00 €','03.06 - 09.06 : 5 Werktag(e)',0,0,0,''],
 [762,987,185,3,W,27,'r','2.2.4. Schornstein','','',0,0,0,''],
 [995,690,191,3,L,43,'r','3.1.1. Wände','12.000,00 €','16.06 - 04.07 : 15 Werktag(e)',0,0,0,''],
 [995,776,191,3,L,19,'r','3.1.2. Zwischendecke','20.000,00 €','07.07 - 18.07 : 10 Werktag(e)',0,0,0,'n'],
 [995,888,256,3,L,8,'r','3.1.3. Bau-Treppe/-Fenster &-Türen','500,00 €','07.07 - 11.07 : 5 Werktag(e)',0,0,0,''],
 [995,974,185,3,L,26,'r','3.1.4. Schornstein','','',0,0,0,''],
 [1304,690,185,3,W,32,'r','3.2.1. Dachstuhl','9.800,00 €','21.07 - 25.07 : 5 Werktag(e)',0,0,0,''],
 [1304,776,185,3,W,30,'r','3.2.2. Dachlatten','850,00 €','28.07 - 29.07 : 2 Werktag(e)',0,0,0,''],
 [1304,862,185,3,W,29,'r','3.2.3. Dachziegel','6.400,00 €','30.07 - 31.07 : 2 Werktag(e)',0,0,0,''],
 [1304,949,205,3,W,8,'r','3.2.4. Schornsteinanschluss','500,00 €','',0,0,0,'']
];
const hi={l:use('ringl',17,17),v:use('tag',16,17,V),o:use('tag',16,17,O),w:use('warn',15,15),r:use('ring',17,17),a:use('alarm',16,17)};
const foot=k=>`<div class="ft">${k.includes('n')?use('note'):''}${k.includes('f')?'<span class="fx">fx</span>':''}</div>`;
const body=(pk,label,cost,date,eff,ppl,money,k)=>{
 if(!cost) return '<div class="bd"></div>';
 const g=pk?' grey':'';
 return `<div class="bd${k?'':' nofoot'}"><div class="rw ${pk?'pk':'lv'}">${use(pk?'gear':'list')}<span class="d-flex kos"><span class="lbl">${label}</span><span class="val">${cost}</span></span></div>`+
 (date?`<div class="rw${g}${eff?'':' sole'}">${use('cal',16,17)}<span>${date}</span></div>`:'')+
 (eff?`<div class="rw eff${g}">Aufwand: ${eff}</div>`:'')+
 (ppl?`<div class="rw chips">${ppl.map(p=>`<span class="chip">${use('pers',12,13)}${p}<button class="plain ms-1" aria-label="Entfernen">${use('xx',9,9)}</button></span>`).join('')}</div>`:'')+
 (money?`<div class="rw money">${use('bag',16,17)}<span>${money}</span></div>`:'')+(k?foot(k):'')+'</div>';
};
// connectors
const V1=(x,a,b,w=1)=>`<path d="M${x} ${a}V${b}" stroke-width="${w}"/>`;
const H1=(y,a,b)=>`<path d="M${a} ${y}H${b}"/>`;
let s='<svg width="1960" height="1100" fill="none" stroke="#5d5c66">';
s+=H1(258.5,278,1628)+[278.5,696.5,1238.5,1627.5].map(x=>V1(x,258,380)+`<circle cx="${x}" cy="356.500" r="3" fill="#fff"/>`).join('');
s+=V1(278.5,510,563)+V1(696.5,510,536)+H1(536.5,569,849)+V1(569.5,536,563)+V1(848.5,536,563);
s+=V1(1238.5,497,524)+H1(524.5,1081,1391)+V1(1081.5,524,550)+V1(1390.5,524,550);
s+=V1(1529,497,524)+V1(1529,524,1010,2)+H1(552.5,1529,1548);
[[147.5,679,1010,[731,899],159],[445.5,679,1010,[731,899],457],[750.5,667,1010,[719,805,917],762],[983.5,654,991,[706,793,904,991],995],[1292.500,654,1010,[706,793,879,965],1304],[1566.500,645,995,[700,848,995],1587]]
 .forEach(([x,a,b,ys,e])=>{s+=V1(x,a,b)+ys.map(y=>H1(y+.5,x,e)).join('')});
s+=V1(1603.5,792,813)+V1(1603.5,940,960);
[[278,536],[696,536],[1238,524],[1529,524],[147,706],[445,706],[750,693],[983,681],[1292,681],[1566,671]]
 .forEach(([x,y])=>s+=`<circle cx="${x+.5}" cy="${y+.5}" r="6" fill="#fff"/><path d="M${x-2.5} ${y+.5}h6" stroke="#222" stroke-width="1.300"/>`);
[[1603,819,4],[1603,967,2]].forEach(([x,y,t])=>s+=`<rect x="${x-9.5}" y="${y-6.500}" width="20" height="12" rx="5.500" fill="#fff"/><text x="${x+.5}" y="${y+3}" text-anchor="middle" font-size="9" fill="#222" stroke="none">${t}</text>`);
s+='<path d="M1372.500 169q0 24 20 24h7"/>';
s+='<g stroke="#4646d2" stroke-width="2" stroke-dasharray="2 2.500"><path d="M457 938L430 1004M762 890L699 1004M999 876L946 974M1304 792L1198 889M482 879v4M818 786v4M867 785v4M855 984v3M1089 884v4M1120 884v3M1088 970v4M1108 970v4M1397 945v4"/></g>';
s+='<circle cx="1213" cy="874" r="10" fill="#fff" stroke="none"/><circle cx="943" cy="983" r="9" fill="#fff" stroke="none"/>';
s+='<g stroke="none">'+[[848,786],[1083,773],[1388,773],[1388,859]].map(([x,y])=>`<path d="M${x} ${y}h16v3h-16z" fill="#fff"/><path d="M${x+3} ${y}h5v2h-5z" fill="#8abf78"/><path d="M${x+8} ${y+1}h6v2h-6z" fill="#f0a8a0"/>`).join('')+'<path d="M851 898h12v3h-12z" fill="#6fa9e6"/></g>';
s+='<svg x="1205" y="866" width="17" height="16"><use href="#rel"/></svg><svg x="933" y="973" width="17" height="16"><use href="#rel"/></svg></svg>';
let h=s+'<div class="sel-root" style="left:853px;top:182px;width:247px;height:162px"></div><div class="sel-soft" style="left:1548px;top:532px;width:234px;height:116px"></div>';
nodes.forEach(([x,y,w,l,c,hx,ic,t,cost,date,eff,ppl,mon,k])=>{
 const pk=ic[0]=='l';
 h+=`<div class="node l${l}" style="left:${x}px;top:${y}px;width:${w}px"><div class="hd" style="background:${c};padding-left:${hx-1}px">${[...ic].map(i=>hi[i]).join('')}<span>${t.replace('&','&amp;')}</span></div>${body(pk,pk?'Paket-Kosten':'Kosten',cost,date,eff,ppl,mon,k)}</div>`;
});
h+=`<div class="node l0" style="left:856px;top:187px;width:241px"><div class="hd"><div class="root-head"><div class="d-flex align-items-center justify-content-center gap-1">${use('clk',18,18)}${use('ringl',18,18)}${use('tag',16,17,'#f33b36')}<span class="root-title">Projekt Hausbau</span></div><div>12.11.2024 - Rev.46</div></div></div>${body(1,'Gesamtkosten','180.510,00 €','03.03 - 30.09 : 152 Werktag(e)','73t, 4s',0,0,'nf')}</div>`;
h+=`<svg width="1960" height="400" class="pe-none"><path d="M966 343h21l-10.500 9z" fill="#3d9bff"/><path d="M976.500 343v6M973.500 346h6" stroke="#fff" stroke-width="1.500"/></svg>`;
h+=`<div class="node" style="left:1399px;top:174px;width:124px"><div class="hd note-hd justify-content-center">Projekthandbuch</div><div class="note-bd"><svg width="16" height="16" viewBox="0 0 16 16" fill="none" stroke="#aaa" stroke-width="1.400"><path d="M5 10l5-6q2-1.500 3 0t0 3l-6 7q-2 1.500-4 0t-.5-4.500l5-6Q9 1 12 2"/></svg></div></div>`;
document.getElementById('plane').innerHTML=h;
// side tabs
const sd=[
 ['Filter','<svg width="16" height="16" viewBox="0 0 24 24"><path d="M2 1h20v2l-6 9v11H9V12L2 3z" fill="#7db4ea"/><path d="M21 12l-5 7h3l-1 5 5-7h-3z" fill="#f7a13c"/></svg>'],
 ['Symbole','<svg width="18" height="18"><rect width="10" height="11" rx="1" fill="#c9303a"/><path d="M4 3l2-1v7" stroke="#fff" stroke-width="1.500" fill="none"/><circle cx="11.500" cy="11" r="5.500" fill="#5ea64a"/><circle cx="11.500" cy="11" r="4" fill="#fff"/><path d="M9.500 11l1.500 1.500 3-3" stroke="#5ea64a" stroke-width="1.600" fill="none"/></svg>'],
 ['Aufgaben','<svg width="18" height="18"><rect x="1" y="2" width="14" height="13" fill="#fff" stroke="#777"/><path d="M1.500 2.500h13v3h-13z" fill="#f4a34c"/><path d="M3 0v3M13 0v3" stroke="#777"/><path d="M5 9l2 2 4-4M12 15h6M15 12v6" stroke="#5ea64a" stroke-width="1.500" fill="none"/></svg>'],
 ['Ressourcen','<svg width="17" height="18" fill="none" stroke="#777" stroke-width="1.200"><circle cx="8" cy="4" r="2.500" fill="#bbb"/><path d="M1 16q1-7 7-8 6 1 7 8z"/></svg>'],
 ['Mapteile','<svg width="18" height="18" fill="#fff" stroke="#777"><path d="M6 8h5M9 3v10M9 3h3M9 13h3" fill="none"/><rect x="1" y="5.500" width="6" height="5" rx="2"/><rect x="11" y="1.500" width="6" height="3" rx="1.500"/><rect x="11" y="6.500" width="6" height="3" rx="1.500"/><path d="M12 15h6M15 12v6" stroke="#5ea64a" stroke-width="1.500"/></svg>'],
 ['Bibliothek','<svg width="18" height="18"><path d="M15 4v10H5" fill="none" stroke="#777"/><rect x="1" y="1" width="12" height="12" fill="#7db4ea" stroke="#3f7fca"/><path d="M3 12l4-6 5 6z" fill="#999" stroke="#666"/><path d="M8 3h3v2H8z" fill="#f7a13c"/><path d="M12 16h6M15 13v5" stroke="#5ea64a" stroke-width="1.500"/></svg>'],
 ['Suche','<svg width="17" height="17"><path d="M10 10l5.500 6" stroke="#888" stroke-width="2.500"/><circle cx="6.500" cy="6.500" r="5.500" fill="#fff" stroke="#888" stroke-width="1.300"/></svg>'],
 ['MindManager','<svg width="17" height="17"><rect width="17" height="17" fill="#3fb0b4"/><path d="M2 6V2h4M11 2h4v4M15 11v4h-4M6 15H2v-4" stroke="#fff" fill="none" stroke-dasharray="3 1"/><path d="M4.500 5L8.500 8l4-3v7.500h-2.500V9.500H7v3H4.500z" fill="#fff"/></svg>'],
 ['Fenster','<svg width="17" height="17" fill="#fff"><rect x="1" y="1" width="10" height="9" rx="1" stroke="#888"/><path d="M3 3h6v3H3z" fill="#bbb"/><rect x="4.700" y="6.700" width="11.500" height="9.500" rx="1" stroke="#3f7fca" stroke-width="1.400"/><path d="M7.500 10h6v3h-6z" fill="#3f7fca"/></svg>'],
 ['Web','<svg width="17" height="17" fill="none" stroke="#777"><circle cx="8.500" cy="8.500" r="7.500" fill="#ccc"/><ellipse cx="8.500" cy="8.500" rx="3.500" ry="7.500"/><path d="M8.500 1v15M1 8.500h15M2 4.500h13M2 12.500h13"/></svg>'],
 ['Excel','<svg width="17" height="17"><path d="M0 2l10-2v17L0 15z" fill="#4f8f0e"/><path d="M3 5l4 7M7 5l-4 7" stroke="#fff" stroke-width="1.400"/><path d="M13 3v12M16 3v12" stroke="#4f8f0e" stroke-width="2" stroke-dasharray="1.500 1"/></svg>']];
document.getElementById('side').innerHTML=sd.map(([n,i])=>`<button aria-label="${n}">${i}</button>`).join('');
</script>
</body>
</html>
